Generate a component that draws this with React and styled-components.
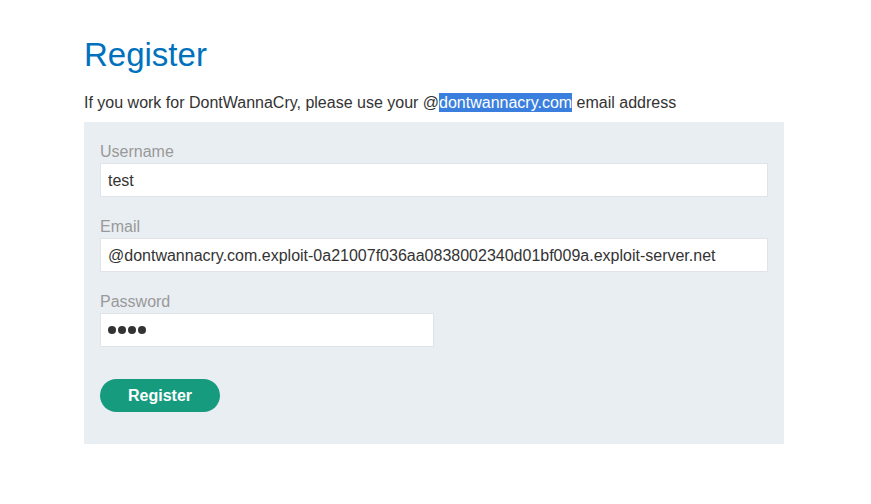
import React from 'react'
import styled, { createGlobalStyle } from "styled-components";

const GlobalStyle = createGlobalStyle`
  body {
    margin: 0;
    background: #fff;
    font-family: "Liberation Sans", Arial, sans-serif;
    color: #333;
  }
`;

const Page = styled.div`
  width: 700px;
  margin: 0 0 0 84px;
  padding-top: 33px;
`;

const Title = styled.h1`
  margin: 0;
  font-size: 33px;
  font-weight: normal;
  line-height: 44px;
  color: #0071bc;
`;

const Intro = styled.p`
  margin: 14px 0 0;
  font-size: 16px;
  line-height: 19px;
  padding: 2px 0 10px;
`;

const Highlight = styled.span`
  background: #3a7fde;
  color: #fff;
  padding: 1px 0;
`;

const FormPanel = styled.form`
  background: #e9eef2;
  padding: 18px 16px 32px;
  display: flex;
  flex-direction: column;
`;

const Field = styled.div`
  display: flex;
  flex-direction: column;
  margin-bottom: 18px;
`;

const Label = styled.label`
  font-size: 16px;
  line-height: 22px;
  padding-top: 1px;
  color: #999;
`;

const Input = styled.input`
  box-sizing: border-box;
  width: 100%;
  height: 34px;
  border: 1px solid #e0e4e8;
  background: #fff;
  padding: 2px 7px 0;
  font-family: "Liberation Sans", Arial, sans-serif;
  font-size: 16px;
  color: #333;
  outline: none;
`;

const Dots = styled.div`
  box-sizing: border-box;
  width: 334px;
  height: 34px;
  border: 1px solid #e0e4e8;
  background: #fff;
  padding: 0 7px;
  display: flex;
  align-items: center;
  gap: 2px;
`;

const Dot = styled.span`
  width: 8px;
  height: 8px;
  border-radius: 50%;
  background: #333;
`;

const Button = styled.button`
  align-self: flex-start;
  margin-top: 14px;
  width: 120px;
  height: 33px;
  border: none;
  border-radius: 17px;
  background: #179b7f;
  color: #fff;
  font-family: "Liberation Sans", Arial, sans-serif;
  font-weight: bold;
  font-size: 16px;
  cursor: pointer;
`;

function App() {
  return (
    <>
      <GlobalStyle />
      <Page>
        <Title>Register</Title>
        <Intro>
          If you work for DontWannaCry, please use your @<Highlight>dontwannacry.com</Highlight> email address
        </Intro>
        <FormPanel onSubmit={e => e.preventDefault()}>
          <Field>
            <Label>Username</Label>
            <Input defaultValue="test" />
          </Field>
          <Field>
            <Label>Email</Label>
            <Input defaultValue="@dontwannacry.com.exploit-0a21007f036aa0838002340d01bf009a.exploit-server.net" />
          </Field>
          <Field>
            <Label>Password</Label>
            <Dots>
              <Dot /><Dot /><Dot /><Dot />
            </Dots>
          </Field>
          <Button>Register</Button>
        </FormPanel>
      </Page>
    </>
  )
}

export default App
